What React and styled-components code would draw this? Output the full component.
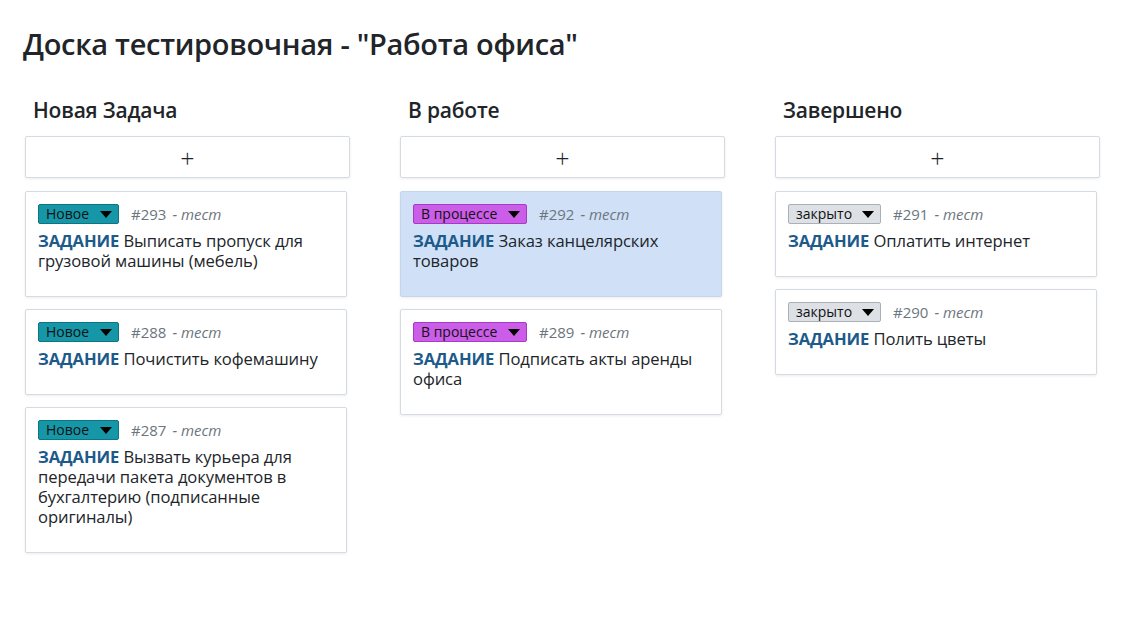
import React from 'react';
import styled, { createGlobalStyle } from 'styled-components';

const Global = createGlobalStyle`
  body {
    margin: 0;
    background: #fff;
    font-family: "Open Sans", "Noto Sans", sans-serif;
    color: #212529;
  }
`;

const Page = styled.div`
  padding: 26px 25px;
`;

const Title = styled.h1`
  margin: 0 0 0 -2px;
  font-size: 29px;
  font-weight: 600;
  line-height: 36px;
  letter-spacing: -0.3px;
`;

const Board = styled.div`
  display: grid;
  grid-template-columns: repeat(3, 325px);
  column-gap: 50px;
  margin-top: 34px;
`;

const Column = styled.div`
  display: flex;
  flex-direction: column;
`;

const ColumnTitle = styled.h2`
  margin: 0;
  padding-left: 8px;
  font-size: 21px;
  font-weight: 600;
  line-height: 28px;
  letter-spacing: -0.2px;
`;

const AddButton = styled.button`
  margin-top: 12px;
  height: 42px;
  width: 325px;
  background: #fff;
  border: 1px solid #d5dbe2;
  border-radius: 2px;
  box-shadow: 0 1px 3px rgba(0, 0, 0, 0.08);
  font-family: inherit;
  font-size: 25px;
  font-weight: 300;
  color: #212529;
  line-height: 1;
  padding: 2px 0 0;
  cursor: pointer;
`;

const Cards = styled.div`
  display: flex;
  flex-direction: column;
  gap: 12px;
  margin-top: 13px;
  width: 322px;
`;

const Card = styled.div`
  background: ${(p) => (p.active ? '#cfe0f7' : '#fff')};
  border: 1px solid ${(p) => (p.active ? '#c6d6ea' : '#d5dbe2')};
  border-radius: 2px;
  box-shadow: 0 1px 3px rgba(0, 0, 0, 0.08);
  padding: 12px 12px 25px;
`;

const Meta = styled.div`
  display: flex;
  align-items: center;
  height: 20px;
`;

const statusColors = {
  new: { bg: '#1597a8', border: '#0e7482' },
  work: { bg: '#cb5de8', border: '#a63cc6' },
  done: { bg: '#dde1e6', border: '#a9b0b8' },
};

const Status = styled.div`
  display: flex;
  align-items: center;
  justify-content: space-between;
  box-sizing: border-box;
  height: 20px;
  width: ${(p) => p.w}px;
  padding: 0 6px 0 7px;
  background: ${(p) => statusColors[p.kind].bg};
  border: 1px solid ${(p) => statusColors[p.kind].border};
  border-radius: 2px;
  font-size: 14px;
  color: #111;
  line-height: 1;
`;

const Arrow = styled.span`
  width: 0;
  height: 0;
  border-left: 6px solid transparent;
  border-right: 6px solid transparent;
  border-top: 7px solid #000;
  margin-top: 1px;
`;

const Num = styled.span`
  margin-left: 12px;
  color: #6c757d;
  font-size: 15px;
`;

const Author = styled.span`
  margin-left: 6px;
  color: #6c757d;
  font-size: 15px;
  font-style: italic;
`;

const Text = styled.div`
  margin-top: 7px;
  font-size: 16.6px;
  line-height: 20px;
  letter-spacing: -0.1px;
`;

const Tag = styled.b`
  color: #1c5a8a;
  font-weight: 700;
`;

const columns = [
  {
    title: 'Новая Задача',
    cards: [
      { kind: 'new', label: 'Новое', w: 81, num: 293, text: 'Выписать пропуск для грузовой машины (мебель)' },
      { kind: 'new', label: 'Новое', w: 81, num: 288, text: 'Почистить кофемашину' },
      { kind: 'new', label: 'Новое', w: 81, num: 287, text: 'Вызвать курьера для передачи пакета документов в бухгалтерию (подписанные оригиналы)' },
    ],
  },
  {
    title: 'В работе',
    cards: [
      { kind: 'work', label: 'В процессе', w: 114, num: 292, text: 'Заказ канцелярских товаров', active: true },
      { kind: 'work', label: 'В процессе', w: 114, num: 289, text: 'Подписать акты аренды офиса' },
    ],
  },
  {
    title: 'Завершено',
    cards: [
      { kind: 'done', label: 'закрыто', w: 93, num: 291, text: 'Оплатить интернет' },
      { kind: 'done', label: 'закрыто', w: 93, num: 290, text: 'Полить цветы' },
    ],
  },
];

export default function App() {
  return (
    <Page>
      <Global />
      <Title>Доска тестировочная - "Работа офиса"</Title>
      <Board>
        {columns.map((col) => (
          <Column key={col.title}>
            <ColumnTitle>{col.title}</ColumnTitle>
            <AddButton>+</AddButton>
            <Cards>
              {col.cards.map((c) => (
                <Card key={c.num} active={c.active}>
                  <Meta>
                    <Status kind={c.kind} w={c.w}>
                      {c.label}
                      <Arrow />
                    </Status>
                    <Num>#{c.num}</Num>
                    <Author>- тест</Author>
                  </Meta>
                  <Text>
                    <Tag>ЗАДАНИЕ</Tag> {c.text}
                  </Text>
                </Card>
              ))}
            </Cards>
          </Column>
        ))}
      </Board>
    </Page>
  );
}
